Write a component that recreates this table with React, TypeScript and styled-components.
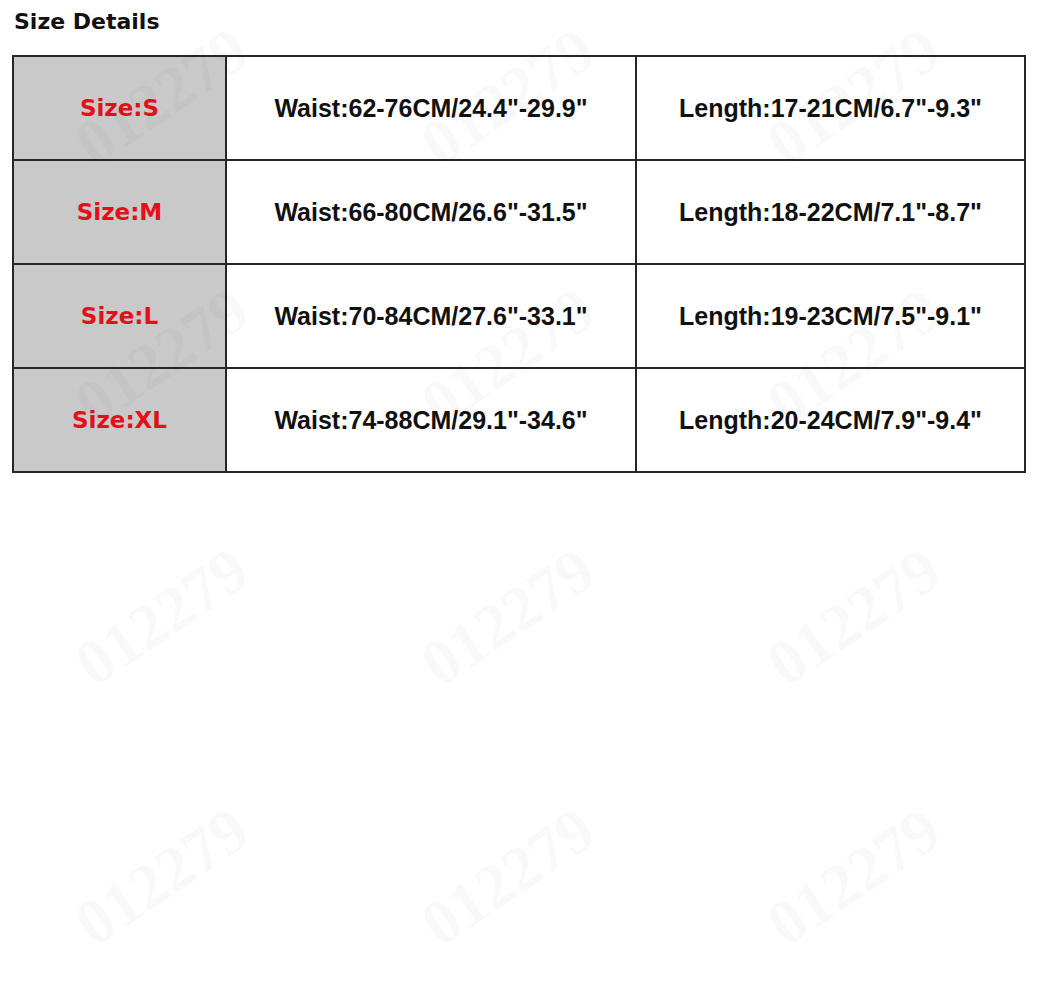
import React from "react";
import styled, { createGlobalStyle } from "styled-components";

const Global = createGlobalStyle`
  html, body { margin: 0; padding: 0; background: #ffffff; }
  body { width: 1038px; height: 1000px; overflow: hidden; }
`;

const Page = styled.div`
  position: relative;
  width: 1038px;
  height: 1000px;
  overflow: hidden;
  background: #ffffff;
  padding-top: 8px;
  box-sizing: border-box;
`;

const Title = styled.h1`
  margin: 0 0 0 14px;
  font-family: "DejaVu Sans", Verdana, sans-serif;
  font-weight: bold;
  font-size: 22px;
  line-height: 28px;
  color: #111;
`;

const Table = styled.table`
  margin: 19px 0 0 12px;
  width: 1014px;
  border-collapse: collapse;
  table-layout: fixed;
`;

const Cell = styled.td<{ $w?: number }>`
  width: ${(p) => (p.$w ? `${p.$w}px` : "auto")};
  height: 102px;
  padding: 0;
  border: 2px solid #262626;
  text-align: center;
  vertical-align: middle;
  font-family: "Liberation Sans", Arial, sans-serif;
  font-weight: bold;
  font-size: 25px;
  color: #111;
  background: #ffffff;
`;

const SizeCell = styled(Cell)`
  background: #c9c9c9;
  color: #e3101c;
  font-family: "DejaVu Sans", Verdana, sans-serif;
  font-size: 23px;
`;

const Overlay = styled.div`
  position: absolute;
  left: -11px;
  top: -33px;
  display: grid;
  grid-template-columns: repeat(3, 346px);
  grid-auto-rows: 260px;
  pointer-events: none;
`;

const Mark = styled.div`
  display: flex;
  align-items: center;
  justify-content: center;
  font-family: "Liberation Serif", "Times New Roman", serif;
  font-weight: bold;
  font-size: 64px;
  color: rgba(0, 0, 0, 0.025);
  span {
    display: block;
    transform: rotate(-34deg);
  }
`;

const rows = [
  { size: "Size:S", waist: 'Waist:62-76CM/24.4"-29.9"', length: 'Length:17-21CM/6.7"-9.3"' },
  { size: "Size:M", waist: 'Waist:66-80CM/26.6"-31.5"', length: 'Length:18-22CM/7.1"-8.7"' },
  { size: "Size:L", waist: 'Waist:70-84CM/27.6"-33.1"', length: 'Length:19-23CM/7.5"-9.1"' },
  { size: "Size:XL", waist: 'Waist:74-88CM/29.1"-34.6"', length: 'Length:20-24CM/7.9"-9.4"' },
];

export default function App() {
  return (
    <Page>
      <Global />
      <Title>Size Details</Title>
      <Table>
        <tbody>
          {rows.map((r, i) => (
            <tr key={r.size}>
              <SizeCell $w={i === 0 ? 211 : undefined}>{r.size}</SizeCell>
              <Cell $w={i === 0 ? 408 : undefined}>{r.waist}</Cell>
              <Cell>{r.length}</Cell>
            </tr>
          ))}
        </tbody>
      </Table>
      <Overlay aria-hidden>
        {Array.from({ length: 12 }).map((_, i) => (
          <Mark key={i}>
            <span>012279</span>
          </Mark>
        ))}
      </Overlay>
    </Page>
  );
}
